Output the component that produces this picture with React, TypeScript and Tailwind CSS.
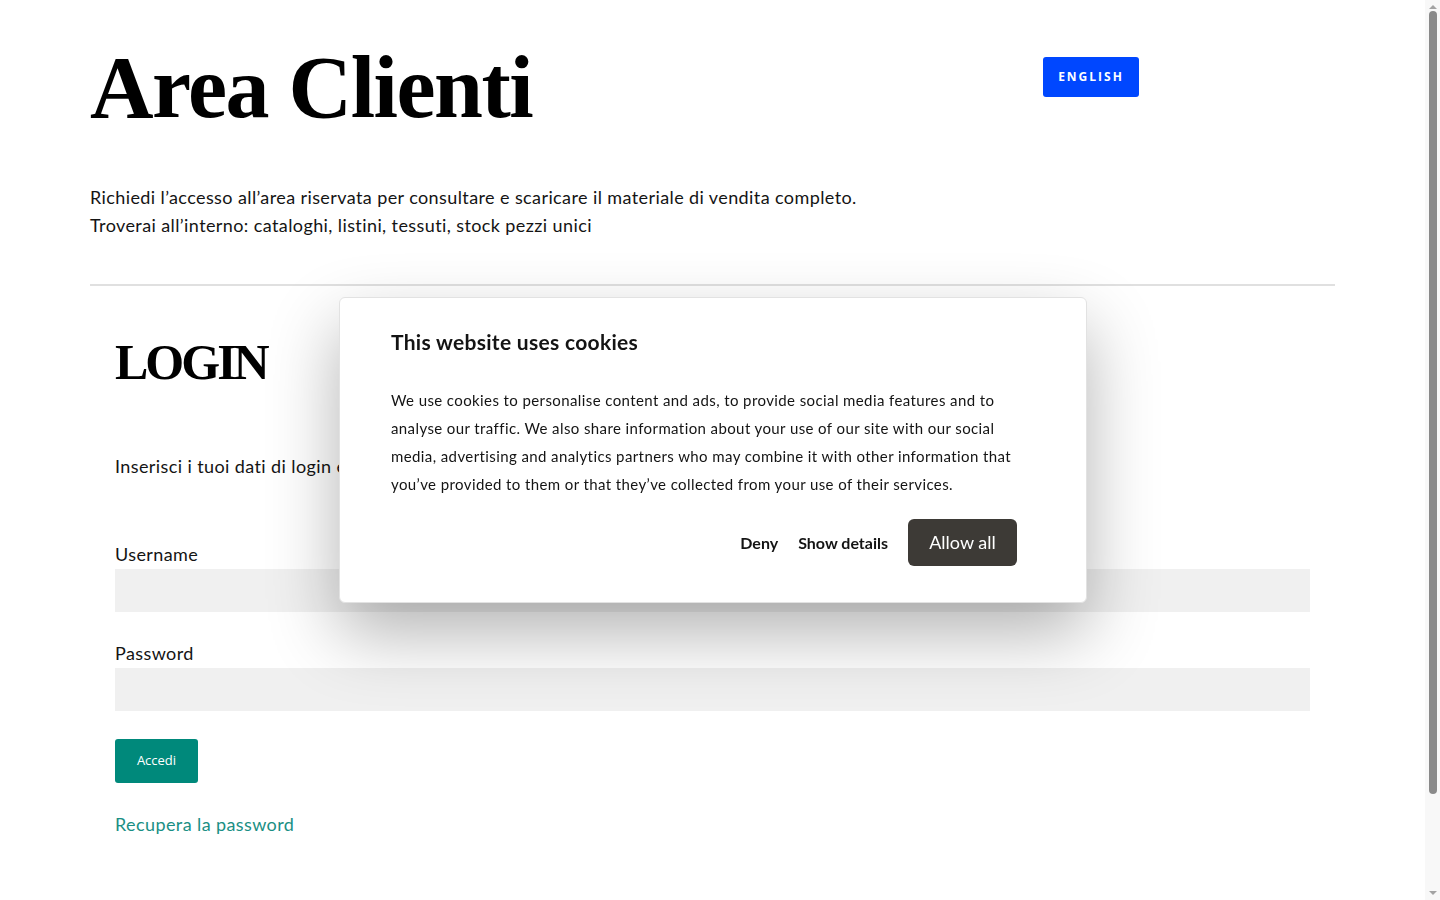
import React from 'react'

const body = "font-['Lato','Noto_Sans',sans-serif]"
const display = "font-['Liberation_Serif','DejaVu_Serif',serif]"

function CookieBanner() {
  return (
    <div className="fixed left-[339px] top-[297px] z-50 w-[748px] rounded-md border border-[#e2e2e2] bg-white px-[51px] pb-[36px] pt-[30px] shadow-[0_30px_70px_rgba(0,0,0,0.3)]">
      <h2 className={`${body} text-[21px] font-bold leading-[28px] tracking-[0.3px] text-[#141414]`}>This website uses cookies</h2>
      <p className={`${body} mt-[30px] text-[15px] leading-[28px] tracking-[0.4px] text-[#141414]`}>
        We use cookies to personalise content and ads, to provide social media features and to analyse our traffic.
        We also share information about your use of our site with our social media, advertising and analytics partners
        who may combine it with other information that you’ve provided to them or that they’ve collected from your use
        of their services.
      </p>
      <div className="mt-[21px] flex items-center justify-end gap-5 pr-[18px]">
        <button className={`${body} text-[16px] font-bold text-[#141414]`}>Deny</button>
        <button className={`${body} text-[16px] font-bold text-[#141414]`}>Show details</button>
        <button className={`${body} h-[47px] w-[109px] rounded-md bg-[#3d3a36] text-[18px] text-white`}>Allow all</button>
      </div>
    </div>
  )
}

// window scrollbar strip on the right edge
function ScrollTrack() {
  return (
    <div className="fixed right-0 top-0 z-40 flex h-[900px] w-[15px] flex-col items-center bg-[#f8f8f8]">
      <div className="mt-[5px] h-0 w-0 border-x-[4px] border-b-[4px] border-x-transparent border-b-[#a3a3a3]" />
      <div className="mt-[2px] h-[783px] w-[8px] rounded-full bg-[#8a8a8a]" />
      <div className="flex-1" />
      <div className="mb-[5px] h-0 w-0 border-x-[4px] border-t-[4px] border-x-transparent border-t-[#a3a3a3]" />
    </div>
  )
}

export default function App() {
  return (
    <div className={`${body} h-[900px] overflow-hidden bg-white text-[#141414]`}>
      <div className="ml-[90px] w-[1245px] pt-[38px]">
        {/* Page header */}
        <div className="flex items-start justify-between pr-[196px]">
          <h1 className={`${display} text-[88px] font-bold leading-[100px] tracking-[-1.5px] text-black`}>Area Clienti</h1>
          <button className="mt-[19px] h-[40px] w-[96px] rounded-[3px] bg-[#0047ff] font-['Open_Sans',sans-serif] text-[12px] font-bold tracking-[2px] text-white">
            ENGLISH
          </button>
        </div>

        <div className="mt-[45px] text-[18px] leading-[28px] tracking-[0.4px]">
          <p>Richiedi l’accesso all’area riservata per consultare e scaricare il materiale di vendita completo.</p>
          <p>Troverai all’interno: cataloghi, listini, tessuti, stock pezzi unici</p>
        </div>

        <hr className="mt-[45px] border-t-2 border-[#e0e0e0]" />

        {/* Login form */}
        <div className="px-[25px] pt-[46px]">
          <h2 className={`${display} text-[50px] font-bold leading-[60px] tracking-[-3px] text-black`}>LOGIN</h2>
          <p className="mt-[60px] w-[600px] text-[18px] leading-[28px] tracking-[0.4px]">
            Inserisci i tuoi dati di login e password
          </p>

          <div className="mt-[61px] tracking-[0.4px]">
            <label className="block text-[18px] leading-[26px]">Username</label>
            <input className="mt-[2px] block h-[43px] w-full bg-[#f0f0f0] outline-none" />
          </div>
          <div className="mt-[28px] tracking-[0.4px]">
            <label className="block text-[18px] leading-[26px]">Password</label>
            <input type="password" className="mt-[2px] block h-[43px] w-full bg-[#f0f0f0] outline-none" />
          </div>

          <button className="mt-[28px] h-[44px] w-[83px] rounded-[3px] bg-[#00897b] font-['Open_Sans',sans-serif] text-[13px] text-white">
            Accedi
          </button>

          <a className="mt-[27px] block text-[18px] leading-[28px] tracking-[0.4px] text-[#1a8f84]" href="#">
            Recupera la password
          </a>
        </div>
      </div>

      <CookieBanner />
      <ScrollTrack />
    </div>
  )
}
